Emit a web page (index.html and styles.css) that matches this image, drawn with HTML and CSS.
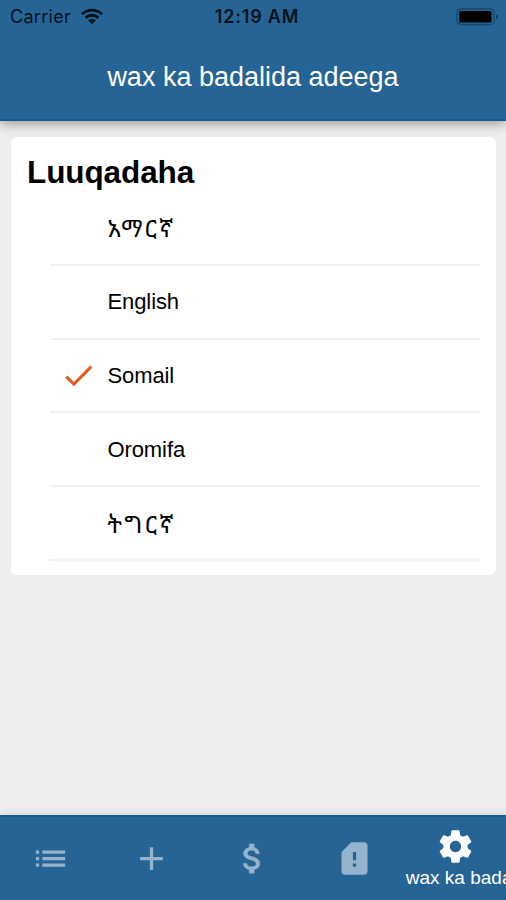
FILE: index.html
```html
<!DOCTYPE html>
<html lang="so">
<head>
    <meta charset="UTF-8">
    <meta name="viewport" content="width=device-width, initial-scale=1.0">
    <title>wax ka badalida adeega</title>
    <link rel="stylesheet" href="styles.css">
</head>
<body>

    <header class="header">
        <div class="status-bar">
            <div class="carrier">
                <span class="carrier-name">Carrier</span>
                <svg class="wifi" viewBox="0 0 24 17">
                    <path d="M2 6.2a14.2 14.2 0 0 1 20 0M5.6 9.9a9.2 9.2 0 0 1 12.8 0" fill="none" stroke="#06121c" stroke-width="2.9"/>
                    <path d="M12 16.2l-3.9-3.9a5.6 5.6 0 0 1 7.8 0z" fill="#06121c"/>
                </svg>
            </div>
            <span class="clock">12:19 AM</span>
            <svg class="battery" viewBox="0 0 43 18">
                <rect x="1" y="1" width="37" height="15.5" rx="4" fill="none" stroke="#1a466a" stroke-width="1.3"/>
                <rect x="3.3" y="3" width="32.2" height="11.6" rx="1.5" fill="#000"/>
                <path d="M40.2 6.2q2 .6 2 2.6t-2 2.6z" fill="#123954"/>
            </svg>
        </div>
        <h1 class="title">wax ka badalida adeega</h1>
    </header>

    <main class="content">
        <section class="card">
            <h2>Luuqadaha</h2>
            <ul class="languages">
                <li><span class="check"></span><span class="name ethiopic">አማርኛ</span></li>
                <li><span class="check"></span><span class="name">English</span></li>
                <li>
                    <span class="check">
                        <svg viewBox="0 0 24 24"><path d="M9 16.17L4.83 12l-1.42 1.41L9 19 21 7l-1.41-1.41z"/></svg>
                    </span>
                    <span class="name">Somail</span>
                </li>
                <li><span class="check"></span><span class="name">Oromifa</span></li>
                <li><span class="check"></span><span class="name ethiopic">ትግርኛ</span></li>
            </ul>
        </section>
    </main>

    <!-- Bottom tabs -->
    <nav class="tabs">
        <a class="tab">
            <svg viewBox="0 0 24 24"><path d="M3 13h2v-2H3v2zm0 4h2v-2H3v2zm0-8h2V7H3v2zm4 4h14v-2H7v2zm0 4h14v-2H7v2zM7 7v2h14V7H7z"/></svg>
        </a>
        <a class="tab">
            <svg viewBox="0 0 24 24"><path d="M19 13h-6v6h-2v-6H5v-2h6V5h2v6h6v2z"/></svg>
        </a>
        <a class="tab">
            <svg viewBox="0 0 24 24"><path stroke="currentColor" stroke-width=".3" d="M11.8 10.9c-2.27-.59-3-1.2-3-2.15 0-1.09 1.01-1.85 2.7-1.85 1.78 0 2.44.85 2.5 2.1h2.21c-.07-1.72-1.12-3.3-3.21-3.81V3h-3v2.16c-1.94.42-3.5 1.68-3.5 3.61 0 2.31 1.91 3.46 4.7 4.13 2.5.6 3 1.48 3 2.41 0 .69-.49 1.79-2.7 1.79-2.06 0-2.87-.92-2.98-2.1h-2.2c.12 2.19 1.76 3.42 3.68 3.83V21h3v-2.15c1.95-.37 3.5-1.5 3.5-3.55 0-2.84-2.43-3.81-4.7-4.4z"/></svg>
        </a>
        <a class="tab">
            <svg viewBox="0 0 24 24"><path d="M18 2h-8L4.02 8 4 20c0 1.1.9 2 2 2h12c1.1 0 2-.9 2-2V4c0-1.1-.9-2-2-2zm-5 15h-2v-2h2v2zm0-4h-2V8h2v5z"/></svg>
        </a>
        <a class="tab active">
            <svg viewBox="0 0 24 24"><path d="M19.43 12.98c.04-.32.07-.64.07-.98s-.03-.66-.07-.98l2.11-1.65c.19-.15.24-.42.12-.64l-2-3.46c-.12-.22-.39-.3-.61-.22l-2.49 1c-.52-.4-1.08-.73-1.69-.98l-.38-2.65C14.46 2.18 14.25 2 14 2h-4c-.25 0-.46.18-.49.42l-.38 2.65c-.61.25-1.17.59-1.69.98l-2.49-1c-.23-.09-.49 0-.61.22l-2 3.46c-.13.22-.07.49.12.64l2.11 1.65c-.04.32-.07.65-.07.98s.03.66.07.98l-2.11 1.65c-.19.15-.24.42-.12.64l2 3.46c.12.22.39.3.61.22l2.49-1c.52.4 1.08.73 1.69.98l.38 2.65c.03.24.24.42.49.42h4c.25 0 .46-.18.49-.42l.38-2.65c.61-.25 1.17-.59 1.69-.98l2.49 1c.23.09.49 0 .61-.22l2-3.46c.12-.22.07-.49-.12-.64l-2.11-1.65zM12 15.5c-1.93 0-3.5-1.57-3.5-3.5s1.57-3.5 3.5-3.5 3.5 1.57 3.5 3.5-1.57 3.5-3.5 3.5z"/></svg>
            <span class="tab-label">wax ka badalida adeega</span>
        </a>
    </nav>

</body>
</html>
```
FILE: styles.css
```css
/* Global Style */
* {
    margin: 0;
    padding: 0;
    box-sizing: border-box;
}
body {
    display: flex;
    flex-direction: column;
    height: 100vh;
    overflow: hidden;
    background: #eeeeee;
    color: #000;
    font-family: "Liberation Sans", Arial, sans-serif;
}

/* Header */
.header {
    height: 121px;
    background: #276496;
    border-bottom: 2px solid #125d8b;
    box-shadow: 0 2px 12px rgba(0, 0, 0, 0.4);
}
.status-bar {
    display: grid;
    grid-template-columns: 1fr auto 1fr;
    align-items: center;
    height: 33px;
    padding: 0 7px 0 10px;
    color: #06121c;
}
.carrier {
    display: flex;
    align-items: center;
    gap: 9px;
}
.carrier-name {
    font-family: Inter, sans-serif;
    font-size: 18px;
    letter-spacing: 0.3px;
}
.wifi {
    width: 24px;
    height: 17px;
}
.clock {
    padding-left: 5px;
    font-family: Inter, sans-serif;
    font-size: 18px;
    font-weight: 600;
    letter-spacing: 0.8px;
}
.battery {
    width: 43px;
    height: 18px;
    justify-self: end;
}
.title {
    padding-top: 29px;
    color: #fff;
    font-size: 27px;
    font-weight: normal;
    line-height: 31px;
    text-align: center;
}

/* Language card */
.content {
    flex: 1;
    padding: 16px 10px 0 11px;
}
.card {
    height: 438px;
    padding: 17px 16px 0;
    background: #fff;
    border-radius: 6px;
}
.card h2 {
    height: 38px;
    font-size: 31.5px;
    letter-spacing: -0.1px;
    line-height: 37px;
}
.languages {
    list-style: none;
    margin-left: 23px;
}
.languages li {
    display: flex;
    align-items: center;
    height: 73.8px;
    border-bottom: 2px solid #f1f1f1;
}
.check {
    width: 57.5px;
    padding-left: 10px;
}
.check svg {
    display: block;
    width: 37px;
    height: 37px;
    fill: #dd5b1b;
}
.name {
    padding-top: 1px;
    font-size: 22px;
    letter-spacing: -0.1px;
}
.ethiopic {
    padding-top: 0;
    font-family: "Noto Sans Ethiopic", "Noto Sans", "Liberation Sans", sans-serif;
    font-size: 24px;
    letter-spacing: 2.4px;
}

/* Bottom tabs */
.tabs {
    display: grid;
    grid-template-columns: repeat(5, 1fr);
    height: 85px;
    background: #276496;
    border-top: 2px solid #165b87;
    box-shadow: 0 -1px 8px rgba(0, 0, 0, 0.12);
}
.tab {
    display: flex;
    flex-direction: column;
    align-items: center;
    justify-content: center;
    min-width: 0;
    color: #95b3cc;
}
.tab svg {
    flex: none;
    width: 39px;
    height: 39px;
    fill: currentColor;
}
.active {
    align-items: flex-start;
    justify-content: flex-start;
    overflow: hidden;
    padding: 10px 0 0 1px;
    color: #fff;
}
.active svg {
    align-self: center;
}
.tab-label {
    font-size: 19px;
    line-height: 24px;
    white-space: nowrap;
}
```
